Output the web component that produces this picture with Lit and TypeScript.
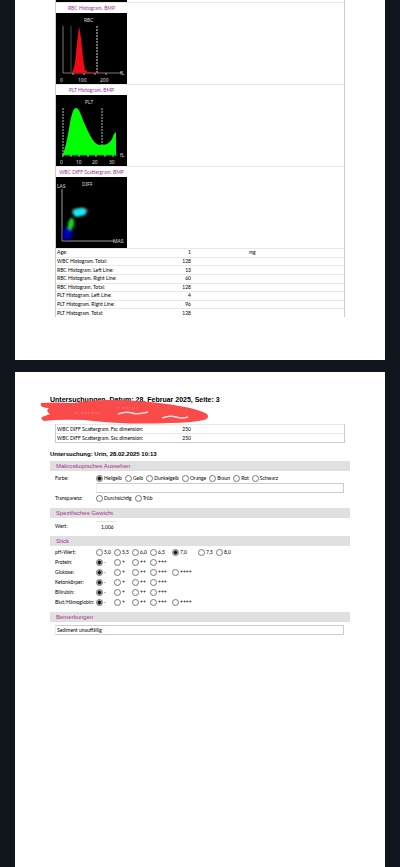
import { LitElement, html, svg, css } from "lit";
import { customElement } from "lit/decorators.js";

const measurements = [
  ["Age:", "1", "mg"],
  ["WBC Histogram. Total:", "128", ""],
  ["RBC Histogram. Left Line:", "13", ""],
  ["RBC Histogram. Right Line:", "60", ""],
  ["RBC Histogram. Total:", "128", ""],
  ["PLT Histogram. Left Line:", "4", ""],
  ["PLT Histogram. Right Line:", "96", ""],
  ["PLT Histogram. Total:", "128", ""],
];

const scatter = [
  ["WBC DIFF Scattergram. Fsc dimension:", "250"],
  ["WBC DIFF Scattergram. Ssc dimension:", "250"],
];

const colours = ["Hellgelb", "Gelb", "Dunkelgelb", "Orange", "Braun", "Rot", "Schwarz"];

const stick: [string, string[], number][] = [
  ["pH-Wert:", ["5,0", "5,5", "6,0", "6,5", "7,0", "7,5", "8,0"], 4],
  ["Protein:", ["-", "+", "++", "+++"], 0],
  ["Glukose:", ["-", "+", "++", "+++", "++++"], 0],
  ["Ketonkörper:", ["-", "+", "++", "+++"], 0],
  ["Bilirubin:", ["-", "+", "++", "+++"], 0],
  ["Blut/Hämoglobin:", ["-", "+", "++", "+++", "++++"], 0],
];

const rbcChart = svg`
  <path d="M7 13V60H66" stroke="#777" fill="none"/>
  <path d="M15 13V60" stroke="#3d5050" fill="none"/>
  <path d="M41 13V61" stroke="#ddd" stroke-dasharray="2 1" fill="none"/>
  <path d="M14 60L17 58L19 50L21 30L23 13L25 25L27 45L29 57L32 59L40 60Z" fill="#f00b16"/>
  <path d="M14 60H50" stroke="#a01018" stroke-dasharray="3 1"/>
  <path d="M17 60v2M28 60v2M39 60v2M50 60v2" stroke="#aaa"/>
  <text x="28" y="9">RBC</text>
  <text x="64" y="62">fL</text>
  <text x="4" y="69">0</text><text x="22" y="69">100</text><text x="44" y="69">200</text>`;

const pltChart = svg`
  <path d="M7 13V60M46 13V60" stroke="#bbb" stroke-dasharray="2 1" fill="none"/>
  <path d="M6 60C9 57 11 44 13 34C15 21 17 13 20 13C24 13 25 22 30 32C35 43 39 50 44 50C50 50 53 49 56 44L58 39L60 37V60Z" fill="#0f0"/>
  <path d="M6 60H61" stroke="#0d0"/>
  <path d="M7 60v2M15 60v2M23 60v2M32 60v2M40 60v2M49 60v2M57 60v2" stroke="#bbb"/>
  <text x="29" y="9">PLT</text>
  <text x="64" y="62">fL</text>
  <text x="4" y="69">0</text><text x="20" y="69">10</text><text x="36" y="69">20</text><text x="53" y="69">30</text>`;

const diffChart = svg`
  <defs><filter id="haze" x="-50%" y="-50%" width="200%" height="200%"><feGaussianBlur stdDeviation="0.8"/></filter></defs>
  <path d="M6 12V64H58" stroke="#999" fill="none"/>
  <g filter="url(#haze)">
    <ellipse cx="24" cy="34" rx="10" ry="4" fill="#300a0a"/>
    <path d="M7 51L12 50L17 55L15 62L7 63Z" fill="#0000b0"/>
    <ellipse cx="15" cy="47" rx="3" ry="6" fill="#1ed21e" transform="rotate(10 15 47)"/>
    <path d="M18 33L27 31L30 33L29 38L20 40L17 37Z" fill="#10eef5"/>
  </g>
  <text x="26" y="9">DIFF</text>
  <text x="1" y="11">LAS</text>
  <text x="57" y="66">MAS</text>`;

@customElement("app-root")
export class AppRoot extends LitElement {
  static styles = css`
    :host {
      display: block;
      min-height: 100vh;
      background: #10141c;
      font: 5px/8px Lato, sans-serif;
      color: #000;
    }
    * { box-sizing: border-box; }
    main { display: flex; flex-direction: column; gap: 12px; padding: 0 15px; min-height: 100vh; }
    .sheet { background: #fff; }
    .first { padding: 0 40px 43px; }
    .second { flex: 1; padding: 23px 35px 0; }
    .results { border: solid #ccc; border-width: 0 1px; }
    .strip { width: 71px; height: 2px; background: #000; }
    .figure { margin: 0; border-top: 1px solid #eaeaea; }
    figcaption { width: 71px; height: 10px; line-height: 10px; text-align: center; color: #a3309a; white-space: nowrap; }
    .chart { display: block; width: 71px; height: 71px; background: #000; fill: #ddd; font-family: "Noto Sans", sans-serif; }
    table { width: 100%; border-collapse: collapse; table-layout: fixed; }
    td, th { padding: 0 1px; font-weight: 400; text-align: left; border-top: 1px solid #e8e8e8; line-height: 7px; white-space: nowrap; }
    .measures { height: 69px; }
    .name { width: 110px; }
    .value { width: 26px; text-align: right; }
    .unit { padding-left: 57px; }
    h1, h2, h3 { margin: 0; font-family: "Liberation Sans", sans-serif; }
    h1 { font-size: 7px; line-height: 9px; }
    h2 { font-size: 6px; line-height: 8px; margin: 7px 0 3px; }
    h3 { font-size: 6px; line-height: 10px; font-weight: 400; color: #a8328c; background: #e0e0e0; padding: 0 6px; }
    .head { position: relative; height: 29px; }
    .scribble { position: absolute; left: -10px; top: 4px; width: 170px; height: 26px; }
    .scatter { margin: 0 5px; border: solid #ccc; border-width: 0 1px 1px; }
    .scatter td, .scatter th { line-height: 8px; }
    .row { display: flex; align-items: center; padding-left: 5px; height: 10px; }
    .key { width: 41px; flex: none; white-space: nowrap; }
    .choices { display: flex; gap: 3px; }
    .steps { display: grid; grid-template-columns: 18px 18px 18px 22px 26px 18px 18px; }
    label { display: flex; align-items: center; gap: 1px; white-space: nowrap; }
    input { font: inherit; color: inherit; margin: 0; padding: 0; outline: 0; }
    input[type="radio"] { appearance: none; width: 7px; height: 7px; flex: none; border: 1px solid #777; border-radius: 4px; background: #fff; }
    input[type="radio"]:checked { background: radial-gradient(circle, #111 0 1px, #fff 3px); }
    .box { display: block; height: 10px; border: 1px solid #ccc; background: #fff; }
    .extra { width: calc(100% - 52px); margin: 0 6px 0 46px; border-left-color: #eee; }
    .note { width: calc(100% - 11px); margin: 3px 6px 0 5px; padding: 0 1px; border-left-color: #eee; }
    .weight { width: 21px; border: 0; border-top: 1px solid #e4e4e4; padding-left: 5px; }
    .looks { padding: 2px 0 5px; }
    .gravity { padding: 3px 0 5px; }
    .sticks { padding: 1px 0 5px; }
  `;

  private choice(group: string, text: string, checked: boolean) {
    return html`<label><input type="radio" name=${group} ?checked=${checked} />${text}</label>`;
  }

  private figure(title: string, chart: unknown) {
    return html`<figure class="figure">
      <figcaption>${title}</figcaption>
      <svg class="chart" viewBox="0 0 71 71" role="img" aria-label=${title}>${chart}</svg>
    </figure>`;
  }

  render() {
    return html`<main>
      <section class="sheet first">
        <div class="results">
          <div class="strip"></div>
          ${this.figure("RBC Histogram. BMP", rbcChart)}
          ${this.figure("PLT Histogram. BMP", pltChart)}
          ${this.figure("WBC DIFF Scattergram. BMP", diffChart)}
          <table class="measures">
            ${measurements.map(([n, v, u]) => html`<tr><th class="name" scope="row">${n}</th><td class="value">${v}</td><td class="unit">${u}</td></tr>`)}
          </table>
        </div>
      </section>
      <section class="sheet second">
        <header class="head">
          <h1>Untersuchungen, Datum: 28. Februar 2025, Seite: 3</h1>
          <svg class="scribble" viewBox="0 0 170 26" aria-hidden="true">
            <path d="M1 4Q16 3 33 4Q50 1 70 1Q90 1 110 3Q132 5 150 9Q162 12 167 15Q170 19 164 21Q150 24 130 24Q100 25 80 24Q60 23 45 21Q20 20 4 22Q0 20 2 18L10 15Q5 12 9 9Q-1 9 1 4Z" fill="#fa4b4b"/>
            <path d="M78 15Q86 12 92 14T108 13M122 19Q130 16 136 18T148 18" stroke="#ffd9d9" stroke-width="1.5" fill="none"/>
            <path d="M35 14h26M76 9h22" stroke="#fb7a7a" stroke-dasharray="2 1 1 2 3 1" fill="none"/>
          </svg>
        </header>
        <div class="scatter">
          <table>
            ${scatter.map(([n, v]) => html`<tr><th class="name" scope="row">${n}</th><td class="value">${v}</td><td></td></tr>`)}
          </table>
        </div>
        <h2>Untersuchung: Urin, 28.02.2025 10:13</h2>
        <h3>Makroskopisches Aussehen</h3>
        <div class="looks">
          <div class="row" role="radiogroup" aria-label="Farbe">
            <span class="key">Farbe:</span>
            <div class="choices">${colours.map((c, i) => this.choice("farbe", c, i === 0))}</div>
          </div>
          <input class="box extra" aria-label="Farbe, Zusatz" />
          <div class="row" role="radiogroup" aria-label="Transparenz">
            <span class="key">Transparenz:</span>
            <div class="choices">${["Durchsichtig", "Trüb"].map((c) => this.choice("transparenz", c, false))}</div>
          </div>
        </div>
        <h3>Spezifisches Gewicht</h3>
        <div class="gravity">
          <div class="row">
            <label class="key" for="wert">Wert:</label>
            <input class="box weight" id="wert" value="1,006" />
          </div>
        </div>
        <h3>Stick</h3>
        <div class="sticks">
          ${stick.map(([name, values, on], r) => html`<div class="row" role="radiogroup" aria-label=${name}>
            <span class="key">${name}</span>
            <div class="steps">${values.map((v, i) => this.choice("stick" + r, v, i === on))}</div>
          </div>`)}
        </div>
        <h3>Bemerkungen</h3>
        <input class="box note" aria-label="Bemerkungen" value="Sediment unauffällig" />
      </section>
    </main>`;
  }
}
